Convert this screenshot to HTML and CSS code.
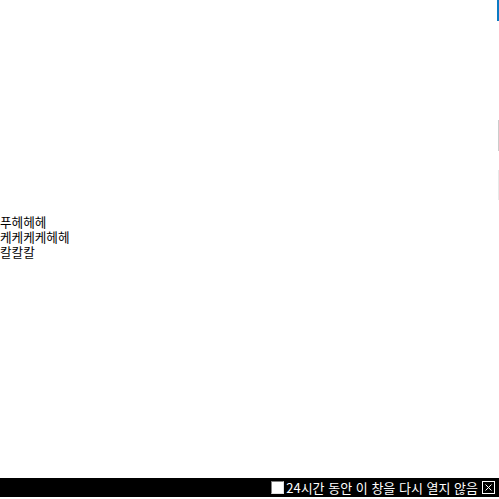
FILE: index.html
```html
<!DOCTYPE html>
<html lang="ko">
<head>
<meta charset="utf-8">
<link rel="stylesheet" href="styles.css">
</head>
<body>
<div class="page">
  <div class="content">
    <div class="line">푸헤헤헤</div>
    <div class="line">케케케케헤헤</div>
    <div class="line">칼칼칼</div>
  </div>
  <div class="bar">
    <span class="check"></span>
    <span class="bar-text">24시간 동안 이 창을 다시 열지 않음</span>
    <span class="close">
      <svg width="13" height="13" viewBox="0 0 13 13"><rect x="0.5" y="0.5" width="12" height="12" fill="none" stroke="#fff"/><path d="M3.5 3.5L9.5 9.5M9.5 3.5L3.5 9.5" stroke="#fff" stroke-width="1"/></svg>
    </span>
  </div>
</div>
<div class="edge edge-blue"></div>
<div class="edge edge-grey"></div>
<div class="edge edge-light"></div>
</body>
</html>
```
FILE: styles.css
```css
html, body {
  margin: 0;
  padding: 0;
  background: #fff;
}
body {
  font-family: "Noto Sans CJK KR", "Noto Sans", sans-serif;
  color: #000;
  width: 499px;
  height: 499px;
  overflow: hidden;
  position: relative;
}
.page {
  height: 497px;
  display: flex;
  flex-direction: column;
}
.content {
  padding-top: 214px;
  font-size: 12.6px;
  line-height: 15px;
}
.bar {
  margin-top: auto;
  height: 19px;
  background: #000;
  color: #fff;
  display: flex;
  align-items: center;
  justify-content: flex-end;
  padding-right: 4px;
  font-size: 13px;
}
.check {
  width: 11px;
  height: 11px;
  background: #fff;
  border: 1px solid;
  border-color: #808080 #e0e0e0 #e0e0e0 #808080;
  margin-right: 2px;
}
.bar-text {
  line-height: 19px;
}
.close {
  display: flex;
  margin-left: 4px;
}
.edge {
  position: absolute;
  right: 0;
  width: 2px;
}
.edge-blue {
  top: 0;
  height: 21px;
  background: #0a7bc4;
}
.edge-grey {
  top: 120px;
  height: 31px;
  width: 1px;
  background: #ccc;
}
.edge-light {
  top: 170px;
  height: 30px;
  width: 1px;
  background: #e8e8e8;
}
```
